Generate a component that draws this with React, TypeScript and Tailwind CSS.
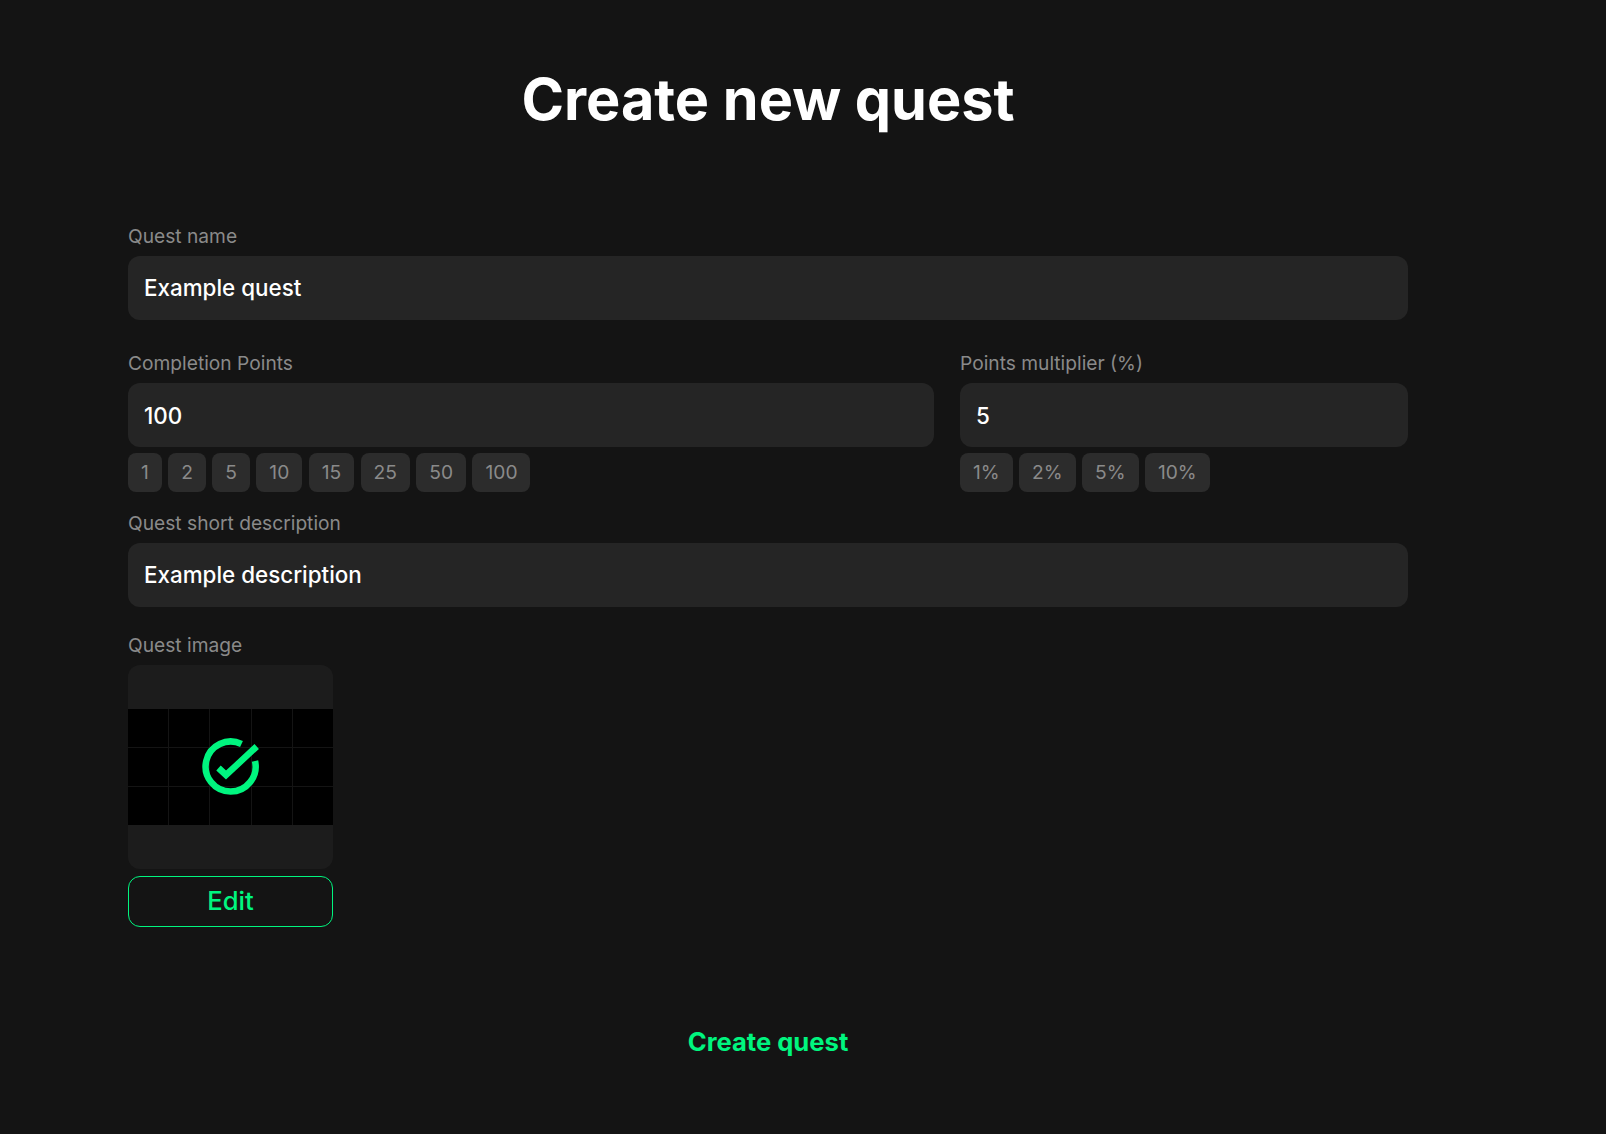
import React from "react";

const pointChips = ["1", "2", "5", "10", "15", "25", "50", "100"];
const multiplierChips = ["1%", "2%", "5%", "10%"];

function Label({ children }: { children: React.ReactNode }) {
  return <div className="h-[26px] text-[19.2px] leading-[26px] text-[#8a8a8a]">{children}</div>;
}

function Input({ value, nudge }: { value: string; nudge?: boolean }) {
  return (
    <div
      className={
        nudge
          ? "mt-[7px] flex h-16 items-center rounded-xl bg-[#252525] px-4 pt-0.5 text-[22.4px] font-medium text-white"
          : "mt-[7px] flex h-16 items-center rounded-xl bg-[#252525] px-4 text-[22.4px] font-medium text-white"
      }
    >
      {value}
    </div>
  );
}

function Chips({ items }: { items: string[] }) {
  return (
    <div className="mt-1.5 flex gap-[6.4px]">
      {items.map((c) => (
        <div
          key={c}
          className="flex h-[39px] items-center rounded-lg bg-[#2c2c2c] px-[13px] text-[19.2px] text-[#8a8a8a]"
        >
          {c}
        </div>
      ))}
    </div>
  );
}

function QuestArt() {
  return (
    <svg viewBox="0 0 205 116" className="block h-[116px] w-full">
      <rect width="205" height="116" fill="#000" />
      <g stroke="#141414" strokeWidth="1">
        <path d="M40.5 0V116M81.5 0V116M123.5 0V116M164.5 0V116" />
        <path d="M0 38.5H205M0 77.5H205" />
      </g>
      <g fill="none" stroke="#00f57f" strokeWidth="6.5">
        <path d="M113.5 35A25 25 0 1 0 127 52" />
        <path d="M90.5 59L98 66L128.7 37.5" />
      </g>
    </svg>
  );
}

export default function App() {
  return (
    <div className="min-h-[1134px] bg-[#141414] pl-32 pr-[198px] pt-[64px] font-['Inter',sans-serif]">
      <h1 className="h-[70px] text-center text-[57.6px] font-bold leading-[70px] text-white">Create new quest</h1>

      <div className="mt-[89px]">
        <Label>Quest name</Label>
        <Input value="Example quest" />
      </div>

      <div className="mt-[30px] flex gap-[26px]">
        <div className="flex-1">
          <Label>Completion Points</Label>
          <Input value="100" nudge />
          <Chips items={pointChips} />
        </div>
        <div className="w-[448px]">
          <Label>Points multiplier (%)</Label>
          <Input value="5" nudge />
          <Chips items={multiplierChips} />
        </div>
      </div>

      <div className="mt-[18px]">
        <Label>Quest short description</Label>
        <Input value="Example description" />
      </div>

      <div className="mt-[25px]">
        <Label>Quest image</Label>
        <div className="mt-[7px] flex h-[204px] w-[205px] items-center overflow-hidden rounded-xl bg-[#1c1c1c]">
          <QuestArt />
        </div>
        <button className="mt-[7px] h-[51px] w-[205px] rounded-xl border-[1.3px] border-[#00f57f] text-[25.6px] font-medium text-[#00f57f]">
          Edit
        </button>
      </div>

      <div className="mt-[97px] text-center text-[25.6px] font-bold leading-9 text-[#00f57f]">Create quest</div>
    </div>
  );
}
